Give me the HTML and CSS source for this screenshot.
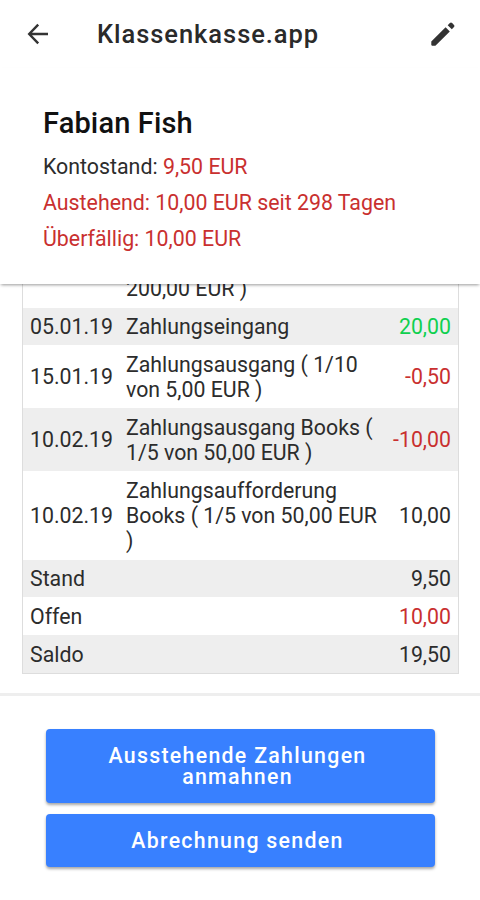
FILE: index.html
```html
<!DOCTYPE html>
<html lang="de">
<head>
  <meta charset="UTF-8">
  <meta name="viewport" content="width=device-width, initial-scale=1.0">
  <title>Klassenkasse.app</title>
  <link rel="stylesheet" href="styles.css">
</head>
<body>
  <header class="toolbar">
    <button class="icon-btn" aria-label="Zurück">
      <svg width="22" height="22" viewBox="0 0 22 22"><path d="M11.2 1.6 L2.2 11 L11.2 20.4 M2.2 11 H21" fill="none" stroke="currentColor" stroke-width="2.4"/></svg>
    </button>
    <h1>Klassenkasse.app</h1>
    <button class="icon-btn" aria-label="Bearbeiten">
      <svg width="24" height="24" viewBox="0 0 24 24"><path d="M.3 19.6 L14.6 5.2 L18.8 9.4 L4.4 23.7 H1 L.3 23 Z M16.7 3.2 L18.9 1 Q20 0 21.1 1 L23 2.9 Q24 4 23 5.1 L20.8 7.3 Z" fill="currentColor"/></svg>
    </button>
  </header>

  <section class="summary">
    <h2>Fabian Fish</h2>
    <p>Kontostand: <span class="red">9,50 EUR</span></p>
    <p class="red">Austehend: 10,00 EUR seit 298 Tagen</p>
    <p class="red">Überfällig: 10,00 EUR</p>
  </section>

  <!-- Scrolled list of bookings -->
  <main class="content">
    <table class="bookings">
      <tr><td></td><td>200,00 EUR )</td><td></td></tr>
      <tr class="odd"><td>05.01.19</td><td>Zahlungseingang</td><td class="amount green">20,00</td></tr>
      <tr><td>15.01.19</td><td>Zahlungsausgang ( 1/10<br>von 5,00 EUR )</td><td class="amount red">-0,50</td></tr>
      <tr class="odd"><td>10.02.19</td><td>Zahlungsausgang Books (<br>1/5 von 50,00 EUR )</td><td class="amount red">-10,00</td></tr>
      <tr><td>10.02.19</td><td>Zahlungsaufforderung<br>Books ( 1/5 von 50,00 EUR<br>)</td><td class="amount">10,00</td></tr>
      <tr class="odd"><td colspan="2">Stand</td><td class="amount">9,50</td></tr>
      <tr><td colspan="2">Offen</td><td class="amount red">10,00</td></tr>
      <tr class="odd"><td colspan="2">Saldo</td><td class="amount">19,50</td></tr>
    </table>
  </main>

  <footer class="actions">
    <button class="btn btn-tall">Ausstehende Zahlungen<br>anmahnen</button>
    <button class="btn">Abrechnung senden</button>
  </footer>
</body>
</html>
```

FILE: styles.css
```css
* {
  box-sizing: border-box;
}
body {
  margin: 0;
  height: 900px;
  display: flex;
  flex-direction: column;
  overflow: hidden;
  background: #fff;
  color: #2c2c2c;
  font-family: Roboto, sans-serif;
}
h1, h2, p {
  margin: 0;
}
button {
  border: 0;
  padding: 0;
  font-family: inherit;
}
.toolbar {
  display: flex;
  align-items: center;
  height: 68px;
  padding: 0 25px 0 27px;
}
.toolbar h1 {
  flex: 1;
  padding-left: 48px;
  font-size: 25.5px;
  font-weight: 500;
  letter-spacing: 0.95px;
  color: #2a2a2a;
}
.icon-btn {
  display: flex;
  background: none;
  color: #333;
}
.summary {
  position: relative;
  height: 216px;
  flex: none;
  padding: 36px 43px 0;
  font-size: 21.35px;
  line-height: 36px;
  box-shadow: 0 2px 3px -1px rgba(0, 0, 0, 0.4);
}
.summary h2 {
  margin-bottom: 6px;
  font-size: 29px;
  font-weight: 500;
  line-height: 39px;
  letter-spacing: 0.15px;
  color: #111;
}
.red {
  color: #c9302f;
}
.green {
  color: #0fd04f;
}
/* pinned to its last row, the first one slides under the summary */
.content {
  display: flex;
  flex-direction: column;
  justify-content: flex-end;
  height: 409px;
  flex: none;
  padding: 0 21px 19px 22px;
  overflow: hidden;
}
.bookings {
  width: 100%;
  table-layout: fixed;
  border: 1px solid #ddd;
  border-top: 0;
  border-spacing: 0;
  font-size: 21.3px;
  line-height: 25.2px;
}
.bookings td {
  padding: 6.3px 7px;
  white-space: nowrap;
}
.bookings td:first-child {
  width: 96px;
}
.bookings td:last-child {
  width: 76px;
}
.odd {
  background: #eee;
}
.amount {
  text-align: right;
}
.actions {
  flex: 1;
  display: flex;
  flex-direction: column;
  gap: 11px;
  padding: 33px 45px 33px 46px;
  border-top: 3px solid #eee;
}
.btn {
  height: 53px;
  padding-right: 6px;
  border-radius: 4px;
  background: #3880ff;
  color: #fff;
  font-size: 21.3px;
  font-weight: 500;
  letter-spacing: 1.3px;
  line-height: 21.5px;
  box-shadow: 0 2px 3px rgba(0, 0, 0, 0.35);
}
.btn-tall {
  height: 74px;
}
```
